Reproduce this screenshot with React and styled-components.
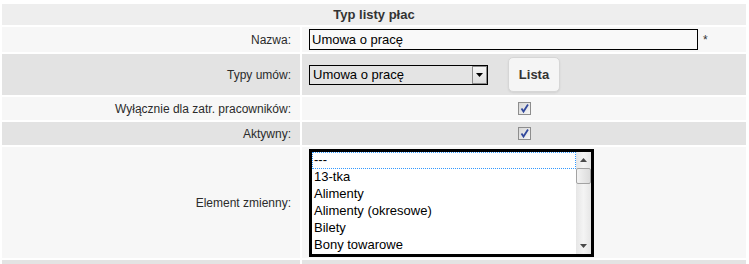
import React from 'react'
import styled, { createGlobalStyle } from 'styled-components'

const GlobalStyle = createGlobalStyle`
body {
    margin: 0;
    background: #fff;
    font-family: "Liberation Sans", Arial, sans-serif;
}
`

const Form = styled.div`
display: flex;
flex-direction: column;
gap: 2px;
width: 749px;
padding: 4px 3px 0 2px;
box-sizing: border-box;
`
const Header = styled.div`
height: 21px;
background: #eeeeee;
color: #333;
font-size: 13px;
font-weight: bold;
display: flex;
align-items: center;
justify-content: center;
`
const Row = styled.div`
display: grid;
grid-template-columns: 298px 1fr;
column-gap: 2px;
height: ${p => p.$h}px;
`
const Label = styled.div`
background: ${p => p.$alt ? '#e3e3e3' : '#f7f7f7'};
display: flex;
align-items: center;
justify-content: flex-end;
padding-right: 9px;
font-size: 12px;
color: #2b2b2b;
`
const Value = styled.div`
background: ${p => p.$alt ? '#e3e3e3' : '#f7f7f7'};
display: flex;
align-items: center;
justify-content: ${p => p.$center ? 'center' : 'flex-start'};
padding-left: ${p => p.$center ? 0 : 7}px;
`
const TextInput = styled.div`
width: 389px;
height: 21px;
box-sizing: border-box;
border: 1px solid #000;
background: #f9f9f9;
font-size: 13px;
color: #000;
padding-left: 2px;
display: flex;
align-items: center;
`
const Required = styled.span`
margin-left: 5px;
font-size: 12px;
color: #333;
`
const Select = styled.div`
width: 179px;
height: 20px;
box-sizing: border-box;
border: 1px solid #000;
background: #e4e4e4;
display: flex;
align-items: center;
justify-content: space-between;
font-size: 13px;
color: #000;
padding-left: 3px;
`
const SelectArrow = styled.span`
width: 15px;
height: 18px;
box-sizing: border-box;
border: 1px solid #8a8a8a;
background: linear-gradient(#f4f4f4, #dedede);
display: flex;
align-items: center;
justify-content: center;
`
const Button = styled.button`
margin-left: 20px;
width: 52px;
height: 35px;
border: 1px solid #d6d6d6;
border-radius: 5px;
background: #f5f5f5;
box-shadow: 0 1px 2px rgba(0,0,0,0.08);
font-family: inherit;
font-size: 13px;
font-weight: bold;
color: #333;
padding: 0;
cursor: pointer;
`
const Check = styled.span`
width: 13px;
height: 13px;
box-sizing: border-box;
border: 1px solid #8d8d8d;
background: linear-gradient(135deg, #d6d6d6, #f6f6f6);
display: flex;
align-items: center;
justify-content: center;
`
const ListBox = styled.div`
width: 285px;
height: 108px;
box-sizing: border-box;
border: 3px solid #000;
background: #fff;
display: flex;
`
const Options = styled.div`
flex: 1;
overflow: hidden;
`
const Option = styled.div`
height: 17px;
box-sizing: border-box;
font-size: 13px;
line-height: 16px;
color: #000;
padding-left: 2px;
white-space: nowrap;
outline: ${p => p.$focus ? '1px dotted #3399ff' : 'none'};
outline-offset: -1px;
`
const Scrollbar = styled.div`
width: 15px;
background: linear-gradient(90deg, #e6e6e6, #f4f4f4 50%, #e6e6e6);
display: flex;
flex-direction: column;
align-items: center;
`
const ScrollBtn = styled.span`
height: 16px;
width: 100%;
display: flex;
align-items: center;
justify-content: center;
`
const Thumb = styled.span`
width: 15px;
height: 16px;
box-sizing: border-box;
border: 1px solid #a3a3a3;
border-radius: 2px;
background: linear-gradient(90deg, #f3f3f3, #dcdcdc);
`
const Track = styled.span`
flex: 1;
`

const Tick = () => (
    <svg width="11" height="11" viewBox="0 0 11 11">
        <path d="M2.5 5.5 L4.5 8.5 L9 1.5" fill="none" stroke="#31489c" strokeWidth="1.8" />
    </svg>
)

const Tri = ({up, color}) => (
    <svg width="7" height="4" viewBox="0 0 7 4">
        <path d={up ? 'M0 4 L3.5 0 L7 4 Z' : 'M0 0 L3.5 4 L7 0 Z'} fill={color} />
    </svg>
)

const elementy = ['---', '13-tka', 'Alimenty', 'Alimenty (okresowe)', 'Bilety', 'Bony towarowe']

const App = () => {
    return (
        <>
            <GlobalStyle />
            <Form>
                <Header>Typ listy płac</Header>
                <Row $h={25}>
                    <Label>Nazwa:</Label>
                    <Value>
                        <TextInput>Umowa o pracę</TextInput>
                        <Required>*</Required>
                    </Value>
                </Row>
                <Row $h={41}>
                    <Label $alt>Typy umów:</Label>
                    <Value $alt>
                        <Select>
                            Umowa o pracę
                            <SelectArrow><Tri color="#000" /></SelectArrow>
                        </Select>
                        <Button>Lista</Button>
                    </Value>
                </Row>
                <Row $h={23}>
                    <Label>Wyłącznie dla zatr. pracowników:</Label>
                    <Value $center><Check><Tick /></Check></Value>
                </Row>
                <Row $h={23}>
                    <Label $alt>Aktywny:</Label>
                    <Value $alt $center><Check><Tick /></Check></Value>
                </Row>
                <Row $h={111}>
                    <Label>Element zmienny:</Label>
                    <Value>
                        <ListBox>
                            <Options>
                                {elementy.map((e, i) => (
                                    <Option key={e} $focus={i === 0}>{e}</Option>
                                ))}
                            </Options>
                            <Scrollbar>
                                <ScrollBtn><Tri up color="#4a4a4a" /></ScrollBtn>
                                <Thumb />
                                <Track />
                                <ScrollBtn><Tri color="#4a4a4a" /></ScrollBtn>
                            </Scrollbar>
                        </ListBox>
                    </Value>
                </Row>
                <Row $h={4}>
                    <Label $alt />
                    <Value $alt />
                </Row>
            </Form>
        </>
    )
}

export default App
